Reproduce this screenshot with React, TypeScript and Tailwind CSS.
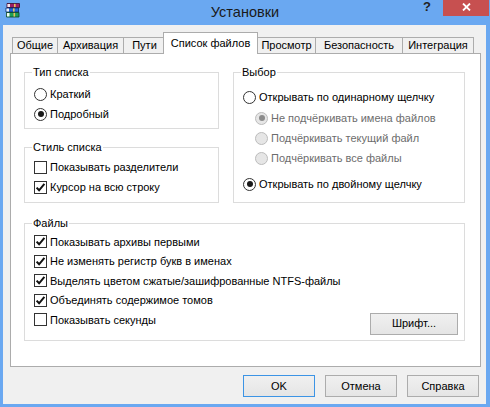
import React from "react";

const font = "font-['Liberation_Sans',Arial,sans-serif]";

function Radio({ checked, disabled }: { checked?: boolean; disabled?: boolean }) {
  return (
    <span
      className={`flex h-[13px] w-[13px] shrink-0 items-center justify-center rounded-full border ${
        disabled ? "border-[#bcbcbc] bg-[#e6e6e6]" : "border-[#333333] bg-white"
      }`}
    >
      {checked && (
        <span
          className={`h-[6px] w-[6px] rounded-full ${disabled ? "bg-[#8c8c8c]" : "bg-[#1a1a1a]"}`}
        />
      )}
    </span>
  );
}

function Check({ checked }: { checked?: boolean }) {
  return (
    <span className="flex h-[13px] w-[13px] shrink-0 items-center justify-center border border-[#333333] bg-white">
      {checked && (
        <svg width="11" height="11" viewBox="0 0 11 11">
          <path d="M1.6 5.6 L4.1 8.3 L9.4 1.8" fill="none" stroke="#111" strokeWidth="2" />
        </svg>
      )}
    </span>
  );
}

function Row({
  children,
  label,
  disabled,
  h = "h-[20px]",
  pl = "pl-[9px]",
}: {
  children: React.ReactNode;
  label: string;
  disabled?: boolean;
  h?: string;
  pl?: string;
}) {
  return (
    <div className={`flex items-center gap-[3px] ${h} ${pl}`}>
      {children}
      <span className={disabled ? "text-[#6d6d6d]" : "text-black"}>{label}</span>
    </div>
  );
}

function Group({
  title,
  className,
  children,
}: {
  title: string;
  className?: string;
  children: React.ReactNode;
}) {
  return (
    <fieldset className={`border border-[#dcdcdc] ${className ?? ""}`}>
      <legend className="ml-[7px] px-[1px] leading-[14px]">{title}</legend>
      {children}
    </fieldset>
  );
}

function WinButton({ label, primary, className }: { label: string; primary?: boolean; className?: string }) {
  return (
    <button
      className={`flex h-[22px] items-center justify-center border bg-gradient-to-b from-[#f0f0f0] to-[#e5e5e5] text-black ${
        primary ? "border-[#3c94e5]" : "border-[#acacac]"
      } ${className ?? ""}`}
    >
      {label}
    </button>
  );
}

function RarIcon() {
  return (
    <svg width="16" height="15" viewBox="0 0 16 15">
      {/* top book */}
      <path d="M2 0.5 H14.5 V4.5 H2 Z" fill="#9b1c63" stroke="#3a0a28" strokeWidth="0.8" />
      <rect x="2.4" y="1" width="2.6" height="3" fill="#f3e6ee" />
      <rect x="9" y="0.9" width="1.6" height="3.2" fill="#e6c25a" />
      {/* middle book */}
      <path d="M1 5 H13.5 V9 H1 Z" fill="#2166d6" stroke="#0b2a60" strokeWidth="0.8" />
      <rect x="1.4" y="5.5" width="2.6" height="3" fill="#eef3fb" />
      <rect x="8" y="5.4" width="1.6" height="3.2" fill="#e6c25a" />
      {/* bottom book */}
      <path d="M1.5 9.5 H14 V14 H1.5 Z" fill="#1f9d55" stroke="#0b3d20" strokeWidth="0.8" />
      <rect x="1.9" y="10" width="2.6" height="3.5" fill="#eefbf3" />
      <rect x="8.5" y="9.9" width="1.6" height="3.7" fill="#e6c25a" />
    </svg>
  );
}

const tabs: { label: string; w: string; ml: string; active?: boolean }[] = [
  { label: "Общие", w: "w-[46px]", ml: "ml-0" },
  { label: "Архивация", w: "w-[67px]", ml: "-ml-px" },
  { label: "Пути", w: "w-[43px]", ml: "-ml-px" },
  { label: "Список файлов", w: "w-[95px]", ml: "-ml-[3px]", active: true },
  { label: "Просмотр", w: "w-[59px]", ml: "-ml-px" },
  { label: "Безопасность", w: "w-[88px]", ml: "-ml-px" },
  { label: "Интеграция", w: "w-[72px]", ml: "-ml-px" },
];

export default function App() {
  return (
    <div className={`flex h-[407px] w-[490px] flex-col bg-[#6aa8f1] text-[11px] ${font}`}>
      {/* title bar */}
      <div className="grid h-[25px] shrink-0 grid-cols-[1fr_auto_1fr]">
        <div className="flex items-start pl-[5px] pt-[3px]">
          <RarIcon />
        </div>
        <div className="pt-[3px] text-[14.5px] leading-[18px] text-[#1a1a1a]">Установки</div>
        <div className="flex items-start justify-end">
          <span className="mr-[12px] pt-[1px] text-[13px] font-bold leading-[12px] text-[#222]">?</span>
          <div className="mr-[1px] flex h-[16px] w-[46px] items-center justify-center bg-[#c75050] pb-[3px]">
            <svg width="9" height="8" viewBox="0 0 9 8">
              <path d="M1 0.5 L8 7.5 M8 0.5 L1 7.5" stroke="white" strokeWidth="1.8" />
            </svg>
          </div>
        </div>
      </div>

      {/* client area */}
      <div className="mb-[3px] ml-[3px] mr-[4px] flex flex-1 flex-col bg-[#f0f0f0] pl-[7px] pr-[5px] pt-[7px]">
        {/* tabs */}
        <div className="ml-[2px] flex h-[22px] items-end">
          {tabs.map((t) =>
            t.active ? (
              <div
                key={t.label}
                className={`relative z-10 flex h-[22px] items-center justify-center border border-b-0 border-[#acacac] bg-white pb-[1px] ${t.w} ${t.ml}`}
              >
                {t.label}
              </div>
            ) : (
              <div
                key={t.label}
                className={`flex h-[17px] items-center justify-center border border-b-0 border-[#acacac] bg-[#f0f0f0] pb-[1px] ${t.w} ${t.ml}`}
              >
                {t.label}
              </div>
            )
          )}
        </div>

        {/* panel */}
        <div className="-mt-px h-[314px] w-[471px] border border-[#acacac] bg-white pl-[13px] pt-[11px]">
          <div className="flex gap-[14px]">
            <div className="flex w-[195px] flex-col gap-[11px]">
              <Group title="Тип списка">
                <div className="pb-[4px] pt-[5px]">
                  <Row label="Краткий">
                    <Radio />
                  </Row>
                  <Row label="Подробный">
                    <Radio checked />
                  </Row>
                </div>
              </Group>
              <Group title="Стиль списка">
                <div className="pb-[5px] pt-[3px]">
                  <Row label="Показывать разделители">
                    <Check />
                  </Row>
                  <Row label="Курсор на всю строку">
                    <Check checked />
                  </Row>
                </div>
              </Group>
            </div>
            <Group title="Выбор" className="w-[232px]">
              <div className="pb-[8px] pt-[8px]">
                <Row label="Открывать по одинарному щелчку">
                  <Radio />
                </Row>
                <div className="mt-[1px]">
                  <Row label="Не подчёркивать имена файлов" disabled pl="pl-[21px]">
                    <Radio checked disabled />
                  </Row>
                  <Row label="Подчёркивать текущий файл" disabled pl="pl-[21px]">
                    <Radio disabled />
                  </Row>
                  <Row label="Подчёркивать все файлы" disabled pl="pl-[21px]">
                    <Radio disabled />
                  </Row>
                </div>
                <div className="mt-[6px]">
                  <Row label="Открывать по двойному щелчку">
                    <Radio checked />
                  </Row>
                </div>
              </div>
            </Group>
          </div>

          <Group title="Файлы" className="mt-[13px] w-[441px]">
            <div className="flex items-end pb-[5px] pr-[6px] pt-[2px]">
              <div className="flex-1 pb-[5px]">
                <Row label="Показывать архивы первыми" h="h-[19.5px]">
                  <Check checked />
                </Row>
                <Row label="Не изменять регистр букв в именах" h="h-[19.5px]">
                  <Check checked />
                </Row>
                <Row label="Выделять цветом сжатые/зашифрованные NTFS-файлы" h="h-[19.5px]">
                  <Check checked />
                </Row>
                <Row label="Объединять содержимое томов" h="h-[19.5px]">
                  <Check checked />
                </Row>
                <Row label="Показывать секунды" h="h-[19.5px]">
                  <Check />
                </Row>
              </div>
              <WinButton label="Шрифт..." className="w-[88px]" />
            </div>
          </Group>
        </div>

        {/* dialog buttons */}
        <div className="mr-[2px] mt-[8px] flex justify-end gap-[10px]">
          <WinButton label="OK" primary className="w-[72px]" />
          <WinButton label="Отмена" className="w-[72px]" />
          <WinButton label="Справка" className="w-[72px]" />
        </div>
      </div>
    </div>
  );
}
